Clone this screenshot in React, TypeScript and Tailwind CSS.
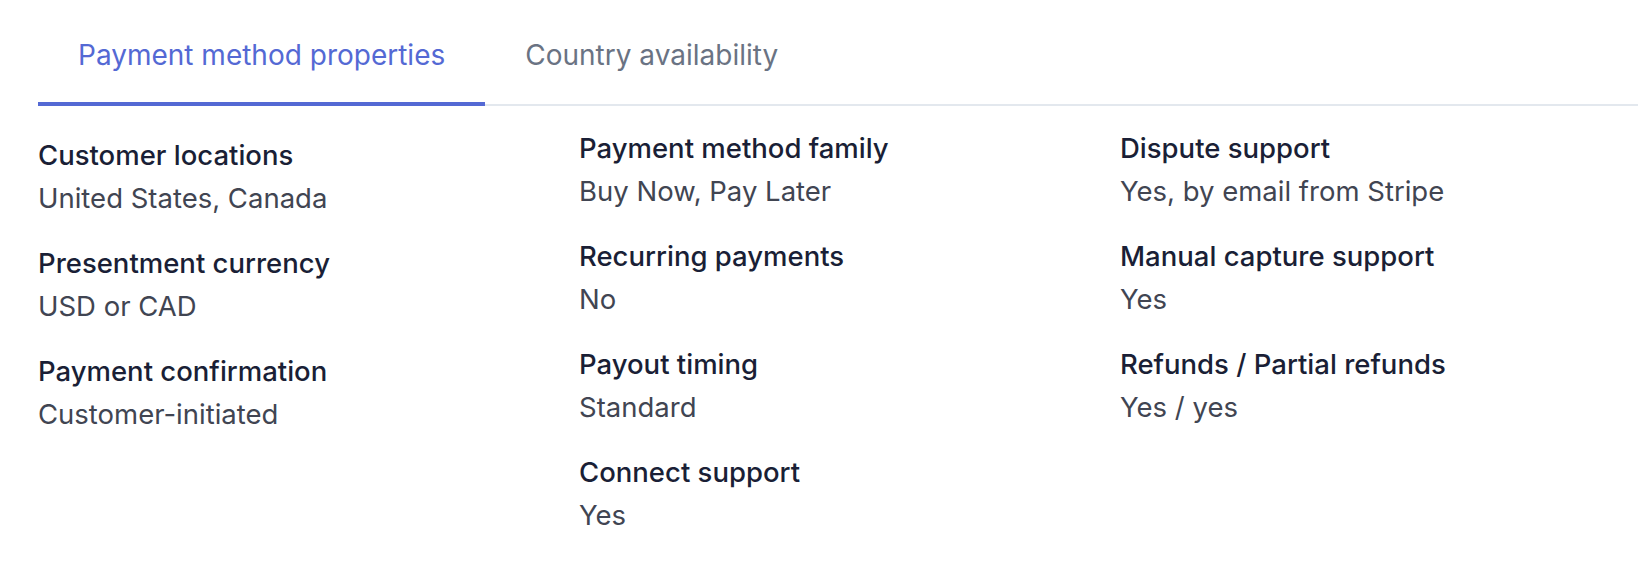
import { useState } from 'react'

const columns = [
    [
        { label: 'Customer locations', value: 'United States, Canada' },
        { label: 'Presentment currency', value: 'USD or CAD' },
        { label: 'Payment confirmation', value: 'Customer-initiated' },
    ],
    [
        { label: 'Payment method family', value: 'Buy Now, Pay Later' },
        { label: 'Recurring payments', value: 'No' },
        { label: 'Payout timing', value: 'Standard' },
        { label: 'Connect support', value: 'Yes' },
    ],
    [
        { label: 'Dispute support', value: 'Yes, by email from Stripe' },
        { label: 'Manual capture support', value: 'Yes' },
        { label: 'Refunds / Partial refunds', value: 'Yes / yes' },
    ],
]

const tabs = ['Payment method properties', 'Country availability']

export default function App() {
    const [active, setActive] = useState(0)

    return (
        <div className="min-h-[580px] bg-white pl-[38px] font-['Inter',sans-serif] antialiased">
            <div className="w-[1600px]">
                {/* Tabs */}
                <div className="flex border-b-2 border-[#e3e8ee]">
                    {tabs.map((tab, i) => (
                        <button
                            key={tab}
                            onClick={() => setActive(i)}
                            className={`-mb-[2px] border-b-4 px-10 pb-[27px] pt-[35px] text-[28px] leading-[40px] ${active === i ? 'border-[#5469d4] text-[#5469d4]' : 'border-transparent text-[#6a7383]'}`}
                        >
                            {tab}
                        </button>
                    ))}
                </div>

                {/* Properties */}
                <div className="grid grid-cols-3 gap-x-[23px] pt-[24px]">
                    {columns.map((col, ci) => (
                        <div key={ci} className={`flex flex-col gap-[29px] ${ci === 0 ? 'pt-[7px]' : ''}`}>
                            {col.map((item) => (
                                <div key={item.label} className="flex flex-col gap-[7px]">
                                    <div className="text-[27.5px] font-medium leading-[36px] text-[#1a1f36]">{item.label}</div>
                                    <div className="text-[27.5px] leading-[36px] text-[#414552]">{item.value}</div>
                                </div>
                            ))}
                        </div>
                    ))}
                </div>
            </div>
        </div>
    )
}
